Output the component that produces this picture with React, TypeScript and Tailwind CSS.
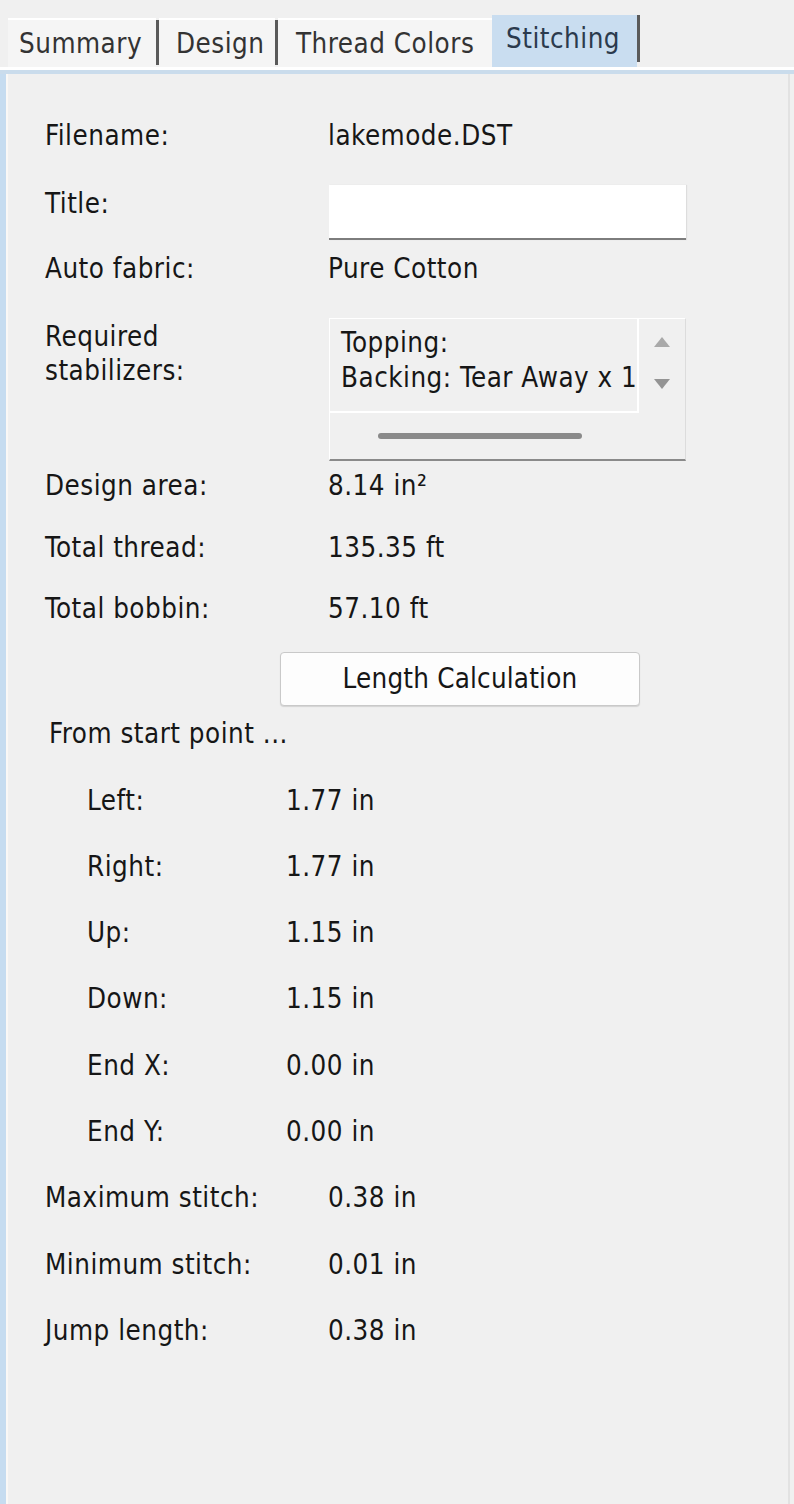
import React from "react";

function Row({ label, value, indent = false }: { label: string; value: string; indent?: boolean }) {
  return (
    <div className={`flex items-center h-[66.3px] ${indent ? "pl-[42px]" : ""}`}>
      <div className={indent ? "w-[199px]" : "w-[283px]"}>{label}</div>
      <div>{value}</div>
    </div>
  );
}

export default function App() {
  return (
    <div className="w-[794px] h-[1504px] bg-[#f0f0f0] flex flex-col font-['DejaVu_Sans_Condensed','DejaVu_Sans',sans-serif] text-[27.5px] tracking-[0.5px] text-[#161616] overflow-hidden">
      {/* Tabs */}
      <div className="flex items-end h-[67px] shrink-0 text-[#333]">
        <div className="ml-[8px] w-[148px] h-[49px] flex items-center pl-[11px] bg-[#f5f5f5] border-t-2 border-white">
          Summary
        </div>
        <div className="w-[3px] h-[45px] bg-[#5a5a5a] mb-[2px]" />
        <div className="w-[116px] h-[49px] flex items-center pl-[17px] bg-[#f5f5f5] border-t-2 border-white">
          Design
        </div>
        <div className="w-[3px] h-[45px] bg-[#5a5a5a] mb-[2px]" />
        <div className="w-[214px] h-[49px] flex items-center pl-[18px] bg-[#f5f5f5] border-t-2 border-white">
          Thread Colors
        </div>
        <div className="w-[145px] h-[52px] flex items-center pl-[14px] pb-[4px] bg-[#c9ddf0] text-[#2b3a4d]">
          Stitching
        </div>
        <div className="w-[3px] h-[47px] bg-[#5a5a5a] mb-[5px]" />
      </div>
      <div className="h-[3px] bg-white shrink-0" />
      <div className="h-[4px] bg-[#cadcec] shrink-0" />

      {/* Panel */}
      <div className="flex-1 flex border-l-[6px] border-[#c6dcf0]">
        <div className="flex-1 flex border-l-2 border-[#faf8f6] border-r-2 border-r-[#e2e2e2] mr-[4px]">
          <div className="flex-1 flex flex-col pl-[37px] pt-[45px]">
            <div className="flex items-center h-[34px]">
              <div className="w-[283px]">Filename:</div>
              <div>lakemode.DST</div>
            </div>

            <div className="flex items-start mt-[32px]">
              <div className="w-[284px] mt-[1px] leading-[34px]">Title:</div>
              <div className="w-[357px] h-[55px] bg-white border-b-2 border-[#7d7d7d] shadow-[1px_0_1px_rgba(0,0,0,0.08)]" />
            </div>

            <div className="flex items-center h-[34px] mt-[12px]">
              <div className="w-[283px]">Auto fabric:</div>
              <div>Pure Cotton</div>
            </div>

            <div className="flex items-start mt-[32px]">
              <div className="w-[284px] leading-[34px] mt-[1px]">
                Required
                <br />
                stabilizers:
              </div>
              <div className="w-[357px] h-[143px] flex flex-col border-t border-l border-white border-b-2 border-b-[#8a8a8a] border-r border-r-[#dcdcdc]">
                <div className="flex h-[94px]">
                  <div className="w-[309px] h-[94px] border-r-2 border-b-2 border-white pl-[11px] pt-[6px] leading-[35px] overflow-hidden whitespace-nowrap">
                    <div>Topping:</div>
                    <div>Backing: Tear Away x 1</div>
                  </div>
                  <div className="flex-1 flex flex-col items-center pt-[18px] gap-[32px]">
                    <svg width="16" height="10" viewBox="0 0 16 10">
                      <polygon points="8,0 16,10 0,10" fill="#a9a9a9" />
                    </svg>
                    <svg width="16" height="10" viewBox="0 0 16 10">
                      <polygon points="0,0 16,0 8,10" fill="#949494" />
                    </svg>
                  </div>
                </div>
                <div className="flex-1 flex items-center pl-[48px]">
                  <div className="w-[204px] h-[6px] rounded-full bg-[#8a8a8a]" />
                </div>
              </div>
            </div>

            <div className="flex items-center h-[34px] mt-[8px]">
              <div className="w-[283px]">Design area:</div>
              <div>8.14 in²</div>
            </div>
            <div className="flex items-center h-[34px] mt-[28px]">
              <div className="w-[283px]">Total thread:</div>
              <div>135.35 ft</div>
            </div>
            <div className="flex items-center h-[34px] mt-[27px]">
              <div className="w-[283px]">Total bobbin:</div>
              <div>57.10 ft</div>
            </div>

            <div className="mt-[26px] ml-[235px] w-[360px] h-[54px] bg-[#fdfdfd] border border-[#c9c9c9] rounded-[4px] shadow-[0_1px_1px_rgba(0,0,0,0.12)] flex items-center justify-center tracking-[0.2px]">
              Length Calculation
            </div>

            <div className="flex items-center h-[34px] mt-[11px] pl-[4px]">From start point ...</div>

            <div className="mt-[16px]">
              <Row indent label="Left:" value="1.77 in" />
              <Row indent label="Right:" value="1.77 in" />
              <Row indent label="Up:" value="1.15 in" />
              <Row indent label="Down:" value="1.15 in" />
              <Row indent label="End X:" value="0.00 in" />
              <Row indent label="End Y:" value="0.00 in" />
              <Row label="Maximum stitch:" value="0.38 in" />
              <Row label="Minimum stitch:" value="0.01 in" />
              <Row label="Jump length:" value="0.38 in" />
            </div>
          </div>
        </div>
      </div>
    </div>
  );
}
